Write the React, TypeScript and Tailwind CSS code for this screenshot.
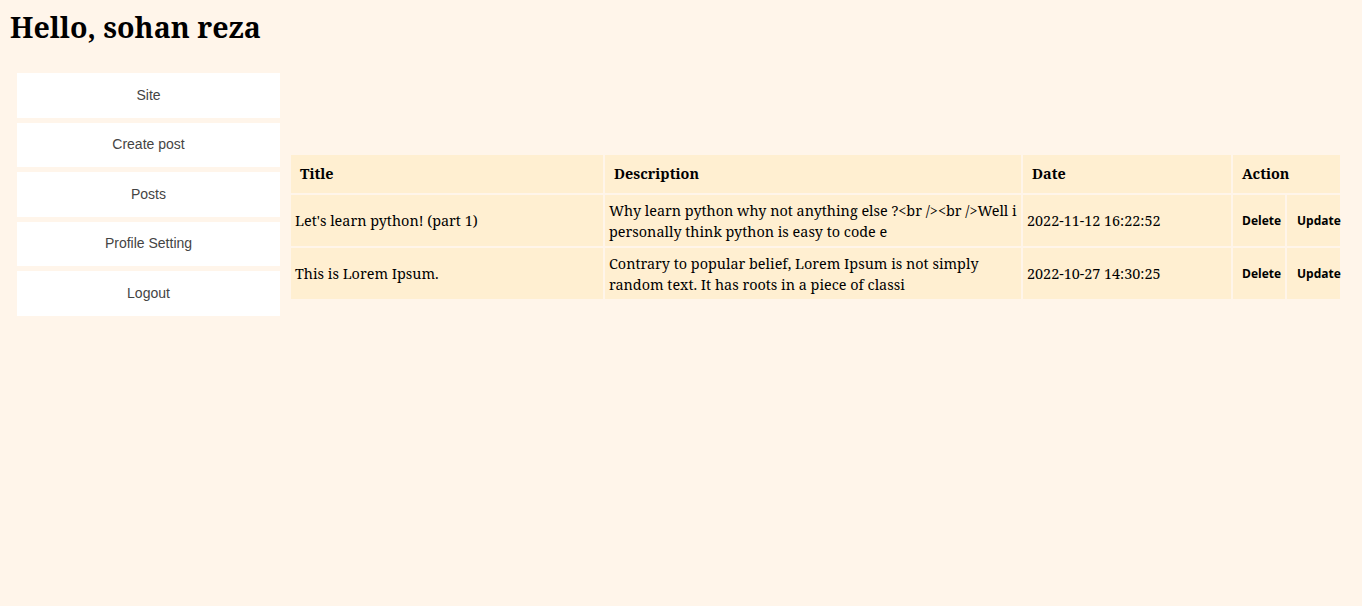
import React from "react";

const serif = "font-['Noto_Serif','DejaVu_Serif',serif]";

const links = ["Site", "Create post", "Posts", "Profile Setting", "Logout"];

const posts = [
  {
    title: "Let's learn python! (part 1)",
    desc: ["Why learn python why not anything else ?<br /><br />Well i", "personally think python is easy to code e"],
    date: "2022-11-12 16:22:52",
  },
  {
    title: "This is Lorem Ipsum.",
    desc: ["Contrary to popular belief, Lorem Ipsum is not simply", "random text. It has roots in a piece of classi"],
    date: "2022-10-27 14:30:25",
  },
];

export default function App() {
  return (
    <div className={`min-h-screen w-full bg-[#fff5ea] text-black ${serif}`}>
      <h1 className="pl-[10px] pt-[6px] text-[28.6px] font-bold leading-[42px]">Hello, sohan reza</h1>

      <div className="flex items-start pt-[25px]">
        {/* Sidebar */}
        <nav className="ml-[17px] flex w-[263px] flex-col gap-[5px] font-['Liberation_Sans',Arial,sans-serif]">
          {links.map((l) => (
            <a
              key={l}
              href="#"
              className="flex h-[44.5px] items-center justify-center bg-white text-[14px] text-[#444]"
            >
              {l}
            </a>
          ))}
        </nav>

        {/* Posts table */}
        <table className="ml-[9px] mt-[80px] w-[1051px] table-fixed border-separate border-spacing-[2px] text-[14.4px]">
          <colgroup>
            <col className="w-[312px]" />
            <col className="w-[416px]" />
            <col className="w-[208px]" />
            <col className="w-[52px]" />
            <col className="w-[53px]" />
          </colgroup>
          <thead>
            <tr>
              <th className="h-[38px] bg-[#ffefd1] pl-[9px] text-left font-bold">Title</th>
              <th className="bg-[#ffefd1] pl-[9px] text-left font-bold">Description</th>
              <th className="bg-[#ffefd1] pl-[9px] text-left font-bold">Date</th>
              <th colSpan={2} className="bg-[#ffefd1] pl-[9px] text-left font-bold">
                Action
              </th>
            </tr>
          </thead>
          <tbody>
            {posts.map((p) => (
              <tr key={p.date}>
                <td className="h-[51px] bg-[#ffefd1] pl-[4px] leading-[22px]">{p.title}</td>
                <td className="whitespace-nowrap bg-[#ffefd1] pl-[4px] leading-[21px]">
                  {p.desc[0]}
                  <br />
                  {p.desc[1]}
                </td>
                <td className="bg-[#ffefd1] pl-[4px] leading-[22px]">{p.date}</td>
                <td className="bg-[#ffefd1] pl-[9px] font-['Open_Sans',sans-serif] text-[12px] font-bold">
                  <a href="#">Delete</a>
                </td>
                <td className="bg-[#ffefd1] pl-[10px] font-['Open_Sans',sans-serif] text-[12px] font-bold">
                  <a href="#">Update</a>
                </td>
              </tr>
            ))}
          </tbody>
        </table>
      </div>
    </div>
  );
}
